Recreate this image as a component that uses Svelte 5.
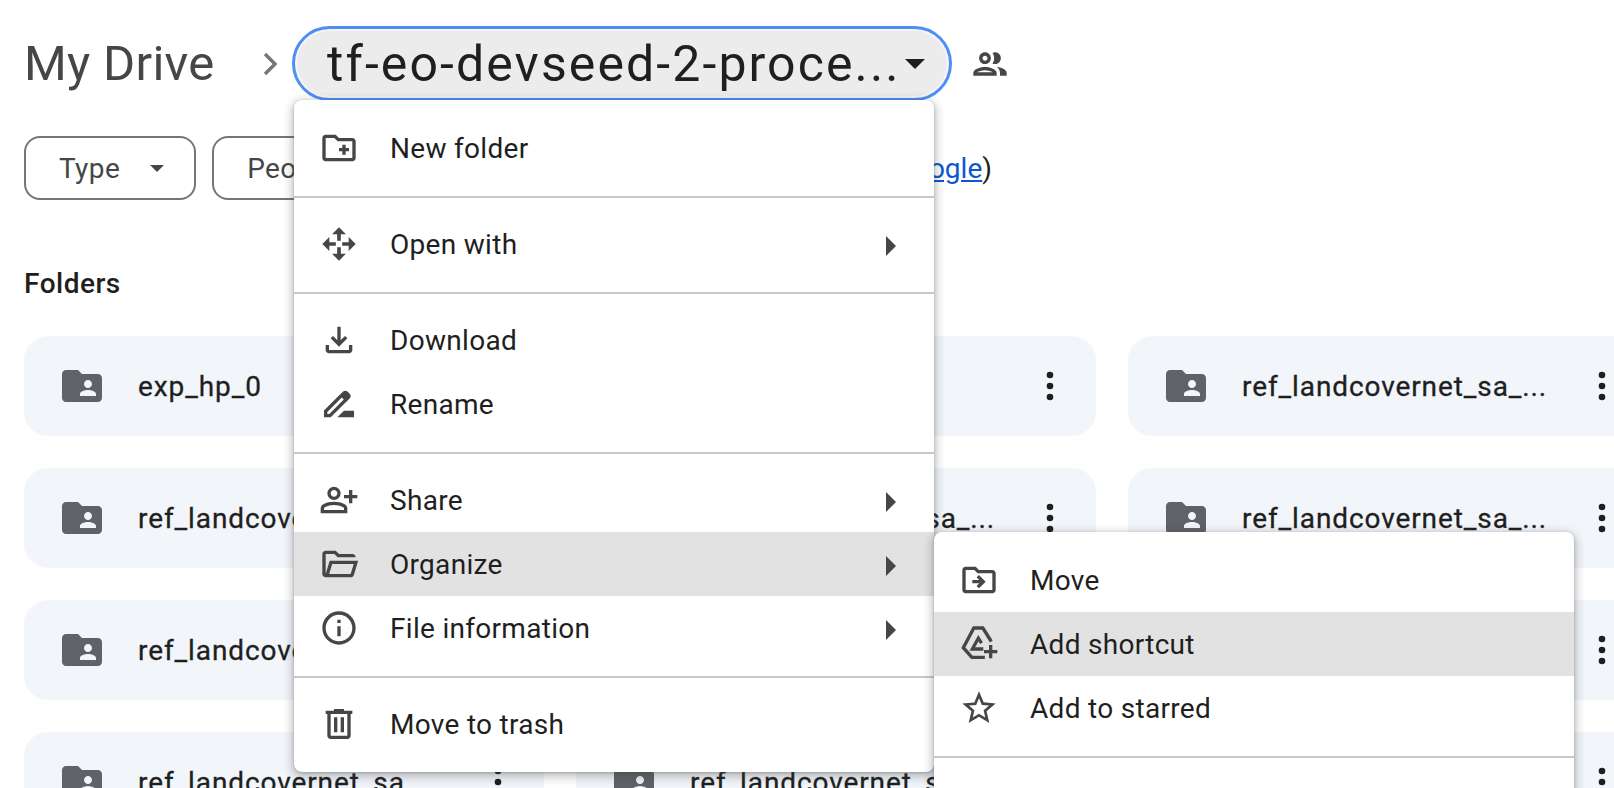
<script lang="ts">
	// Material paths, 24 unit box unless the entry says otherwise.
	const icons: Record<string, { d: string; box?: string; line?: boolean }> = {
		newFolder: { d: 'M20 6h-8l-2-2H4c-1.11 0-1.99.89-1.99 2L2 18c0 1.11.89 2 2 2h16c1.11 0 2-.89 2-2V8c0-1.11-.89-2-2-2zm0 12H4V6h5.17l2 2H20v10zm-8-4h2v2h2v-2h2v-2h-2v-2h-2v2h-2z' },
		openWith: { d: 'M12 2l4.2 4.2h-3.1v3.9h-2.2V6.2H7.8zM12 22l-4.2-4.2h3.1v-3.9h2.2v3.9h3.1zM2 12l4.2-4.2v3.1h3.9v2.2H6.2v3.1zM22 12l-4.2 4.2v-3.1h-3.9v-2.2h3.9V7.8z' },
		download: { box: '0 -960 960 960', d: 'M480-320 280-520l56-58 104 104v-326h80v326l104-104 56 58-200 200ZM240-160q-33 0-56.5-23.5T160-240v-120h80v120h480v-120h80v120q0 33-23.5 56.5T720-160H240Z' },
		rename: { d: 'M18.41 5.8L17.2 4.59c-.78-.78-2.05-.78-2.83 0l-2.68 2.68L3 15.96V20h4.04l8.74-8.74 2.63-2.63c.79-.78.79-2.05 0-2.83zM6.21 18H5v-1.21l8.66-8.66 1.21 1.21L6.21 18zM11 20l4-4h6v4H11z' },
		share: { box: '0 -960 960 960', d: 'M720-400v-120H600v-80h120v-120h80v120h120v80H800v120h-80Zm-360-80q-66 0-113-47t-47-113q0-66 47-113t113-47q66 0 113 47t47 113q0 66-47 113t-113 47ZM40-160v-112q0-34 17.5-62.5T104-378q62-31 126-46.5T360-440q66 0 130 15.5T616-378q29 15 46.5 43.5T680-272v112H40Zm80-80h480v-32q0-11-5.5-20T580-306q-54-27-109-40.5T360-360q-56 0-111 13.5T140-306q-9 5-14.5 14t-5.5 20v32Zm240-320q33 0 56.5-23.5T440-640q0-33-23.5-56.5T360-720q-33 0-56.5 23.5T280-640q0 33 23.5 56.5T360-560Z' },
		organize: { box: '0 -960 960 960', d: 'M160-160q-33 0-56.5-23.5T80-240v-480q0-33 23.5-56.5T160-800h240l80 80h320q33 0 56.5 23.5T880-640H447l-80-80H160v480l96-320h684L837-217q-8 26-29.5 41.5T760-160H160Zm84-80h516l72-240H316l-72 240Z' },
		info: { d: 'M11 7h2v2h-2zm0 4h2v6h-2zm1-9C6.48 2 2 6.48 2 12s4.48 10 10 10 10-4.48 10-10S17.52 2 12 2zm0 18c-4.41 0-8-3.59-8-8s3.59-8 8-8 8 3.59 8 8-3.59 8-8 8z' },
		trash: { box: '0 -960 960 960', d: 'M280-120q-33 0-56.5-23.5T200-200v-520h-40v-80h200v-40h240v40h200v80h-40v520q0 33-23.5 56.5T680-120H280Zm400-600H280v520h400v-520ZM360-280h80v-360h-80v360Zm160 0h80v-360h-80v360Z' },
		move: { d: 'M20 6h-8l-2-2H4c-1.11 0-1.99.89-1.99 2L2 18c0 1.11.89 2 2 2h16c1.11 0 2-.89 2-2V8c0-1.11-.89-2-2-2zm0 12H4V6h5.17l2 2H20v10zm-8.01-9l-1.41 1.41L12.16 12H8v2h4.16l-1.59 1.59L11.99 17 16 13.01 11.99 9z' },
		// Drive shortcut mark is a hexagon outline, so it is stroked.
		shortcut: { line: true, d: 'M19.4 10.5L14.3 2.4H8.9L2.6 14.2 7.7 20h7.8M14.6 15H8l3.6-6.5 1.9 3M15 16.6h8M19 12.6v8' },
		star: { d: 'M22 9.24l-7.19-.62L12 2 9.19 8.63 2 9.24l5.46 4.73L5.82 21 12 17.27 18.18 21l-1.63-7.03L22 9.24zM12 15.4l-3.76 2.27 1-4.28-3.32-2.88 4.38-.38L12 6.1l1.71 4.04 4.38.38-3.32 2.88 1 4.28L12 15.4z' }
	};

	const people = 'M9 13.75c-2.34 0-7 1.17-7 3.5V19h14v-1.75c0-2.33-4.66-3.5-7-3.5zM4.34 17c.84-.58 2.87-1.25 4.66-1.25s3.82.67 4.66 1.25H4.34zM9 12c1.93 0 3.5-1.57 3.5-3.5S10.93 5 9 5 5.5 6.57 5.5 8.5 7.07 12 9 12zm0-5c.83 0 1.5.67 1.5 1.5S9.83 10 9 10s-1.5-.67-1.5-1.5S8.17 7 9 7zm7.04 6.81c1.16.84 1.96 1.96 1.96 3.44V19h4v-1.75c0-2.02-3.5-3.17-5.96-3.44zM15 12c1.93 0 3.5-1.57 3.5-3.5S16.93 5 15 5c-.54 0-1.04.13-1.5.35.63.89 1 1.98 1 3.15s-.37 2.26-1 3.15c.46.22.96.35 1.5.35z';
	const sharedFolder = 'M20 6h-8l-2-2H4c-1.1 0-2 .9-2 2v12c0 1.1.9 2 2 2h16c1.1 0 2-.9 2-2V8c0-1.1-.9-2-2-2zm-5 3c1.1 0 2 .9 2 2s-.9 2-2 2-2-.9-2-2 .9-2 2-2zm4 8h-8v-1c0-1.33 2.67-2 4-2s4 .67 4 2v1z';

	const menuGroups = [
		[{ label: 'New folder', icon: 'newFolder' }],
		[{ label: 'Open with', icon: 'openWith', more: true }],
		[
			{ label: 'Download', icon: 'download' },
			{ label: 'Rename', icon: 'rename' }
		],
		[
			{ label: 'Share', icon: 'share', more: true },
			{ label: 'Organize', icon: 'organize', more: true, active: true },
			{ label: 'File information', icon: 'info', more: true }
		],
		[{ label: 'Move to trash', icon: 'trash' }]
	];

	// The rest of this menu runs past the bottom of the window.
	const subGroups = [
		[
			{ label: 'Move', icon: 'move' },
			{ label: 'Add shortcut', icon: 'shortcut', active: true },
			{ label: 'Add to starred', icon: 'star' }
		],
		[]
	];

	const longName = 'ref_landcovernet_sa_...';
	const folders = [
		'exp_hp_0', 'exp_hp_1', longName,
		longName, longName, longName,
		longName, longName, longName,
		longName, longName, longName
	];
</script>

{#snippet menu(groups, cls)}
	<div class="menu {cls}">
		{#each groups as group, i}
			{#if i > 0}<div class="sep"></div>{/if}
			{#each group as item}
				<div class="item" class:active={item.active}>
					<svg class="item-icon" class:line={icons[item.icon].line} viewBox={icons[item.icon].box ?? '0 0 24 24'}><path d={icons[item.icon].d} /></svg>
					<span class="item-label">{item.label}</span>
					{#if item.more}
						<svg class="more" viewBox="0 0 10 20"><path d="M0 0l10 10L0 20z" /></svg>
					{/if}
				</div>
			{/each}
		{/each}
	</div>
{/snippet}

<div class="page">
	<header class="crumbs">
		<h1>My Drive</h1>
		<svg class="chevron" viewBox="0 0 14 24"><path d="M2 2l10 10L2 22" /></svg>
		<div class="current">
			<span class="current-name">tf-eo-devseed-2-proce...</span>
			<span class="caret big"></span>
		</div>
		<svg class="people" viewBox="0 0 24 24"><path d={people} /></svg>
	</header>

	<div class="filters">
		<div class="filter">Type<span class="caret"></span></div>
		<div class="filter">People<span class="caret"></span></div>
		<span class="note">(<a href="#top">Google</a>)</span>
	</div>

	<h2>Folders</h2>

	<div class="grid">
		{#each folders as name}
			<div class="card">
				<svg class="folder" viewBox="0 0 24 24"><path d={sharedFolder} /></svg>
				<span class="name">{name}</span>
				<svg class="dots" viewBox="0 0 8 30"><circle cx="4" cy="4" r="3.3" /><circle cx="4" cy="15" r="3.3" /><circle cx="4" cy="26" r="3.3" /></svg>
			</div>
		{/each}
	</div>

	{@render menu(menuGroups, 'main')}
	{@render menu(subGroups, 'sub')}
</div>

<style>
	:global(body) {
		margin: 0;
		background: #fff;
	}

	.page {
		position: relative;
		width: 1614px;
		height: 788px;
		overflow: hidden;
		font-family: Roboto, 'Liberation Sans', sans-serif;
		color: #1f1f1f;
	}

	.crumbs {
		display: flex;
		align-items: center;
		height: 75px;
		padding: 26px 0 0 24px;
	}

	h1 {
		margin: 0;
		width: 239px;
		font-size: 49px;
		font-weight: 400;
		letter-spacing: 0.3px;
		color: #444746;
	}

	.chevron {
		width: 14px;
		height: 24px;
		margin-right: 15px;
		fill: none;
		stroke: #747775;
		stroke-width: 3.4;
	}

	.current {
		box-sizing: border-box;
		display: flex;
		align-items: center;
		justify-content: space-between;
		width: 660px;
		height: 75px;
		padding: 0 24px 0 32px;
		border: 3px solid #4f8ef5;
		border-radius: 38px;
		background: #ececec;
		box-shadow: inset 0 0 0 2px #f5f5f5;
	}

	.current-name {
		font-size: 50px;
		letter-spacing: 2.1px;
		color: #1f1f1f;
	}

	.caret {
		width: 0;
		height: 0;
		border: 7px solid transparent;
		border-top-color: #444746;
		border-bottom: 0;
	}

	.caret.big {
		border-width: 10px 10px 0;
		border-top-color: #1f1f1f;
	}

	.people {
		width: 40px;
		height: 40px;
		margin-left: 18px;
		fill: #444746;
	}

	.filters {
		display: flex;
		align-items: center;
		gap: 16px;
		margin: 35px 0 0 24px;
		height: 64px;
	}

	.filter {
		box-sizing: border-box;
		display: flex;
		align-items: center;
		gap: 30px;
		height: 64px;
		padding: 0 30px 0 33px;
		border: 2px solid #747775;
		border-radius: 16px;
		font-size: 28px;
		letter-spacing: 0.4px;
		color: #444746;
	}

	.note {
		margin-left: 457px;
		font-size: 28px;
	}

	.note a {
		color: #0b57d0;
	}

	h2 {
		margin: 0;
		padding: 66px 0 0 24px;
		font-size: 28px;
		font-weight: 500;
		letter-spacing: 0.5px;
		line-height: 36px;
	}

	.grid {
		display: grid;
		grid-template-columns: repeat(3, 520px);
		grid-auto-rows: 100px;
		gap: 32px;
		margin: 34px 0 0 24px;
	}

	.card {
		display: flex;
		align-items: center;
		padding: 0 42px 0 34px;
		border-radius: 24px;
		background: #f2f5fa;
	}

	.folder {
		flex: none;
		width: 48px;
		height: 48px;
		margin-right: 32px;
		fill: #5f6368;
	}

	.name {
		flex: 1;
		white-space: nowrap;
		font-size: 28px;
		letter-spacing: 0.9px;
		-webkit-text-stroke: 0.3px #1f1f1f;
	}

	.dots {
		flex: none;
		width: 8px;
		height: 30px;
		fill: #1f1f1f;
	}

	.menu {
		position: absolute;
		padding: 16px 0;
		border-radius: 8px;
		background: #fff;
		box-shadow: 0 1px 3px rgba(60, 64, 67, 0.3), 0 4px 8px 3px rgba(60, 64, 67, 0.15), 0 2px 12px rgba(60, 64, 67, 0.2);
	}

	.menu.main {
		left: 294px;
		top: 100px;
		width: 640px;
	}

	.menu.sub {
		left: 934px;
		top: 532px;
		width: 640px;
		min-height: 300px;
	}

	.sep {
		height: 2px;
		margin: 16px 0 14px;
		background: #c7c7c7;
	}

	.item {
		display: flex;
		align-items: center;
		height: 64px;
		padding: 0 38px 0 25px;
	}

	.item.active {
		background: #e2e2e2;
	}

	.item-icon {
		flex: none;
		width: 40px;
		height: 40px;
		margin-right: 31px;
		fill: #444746;
	}

	.item-icon.line {
		fill: none;
		stroke: #444746;
		stroke-width: 2;
	}

	.item-label {
		flex: 1;
		font-size: 28px;
		letter-spacing: 0.3px;
		color: #1f1f1f;
	}

	.more {
		width: 10px;
		height: 20px;
		margin-top: 3px;
		fill: #444746;
	}
</style>
